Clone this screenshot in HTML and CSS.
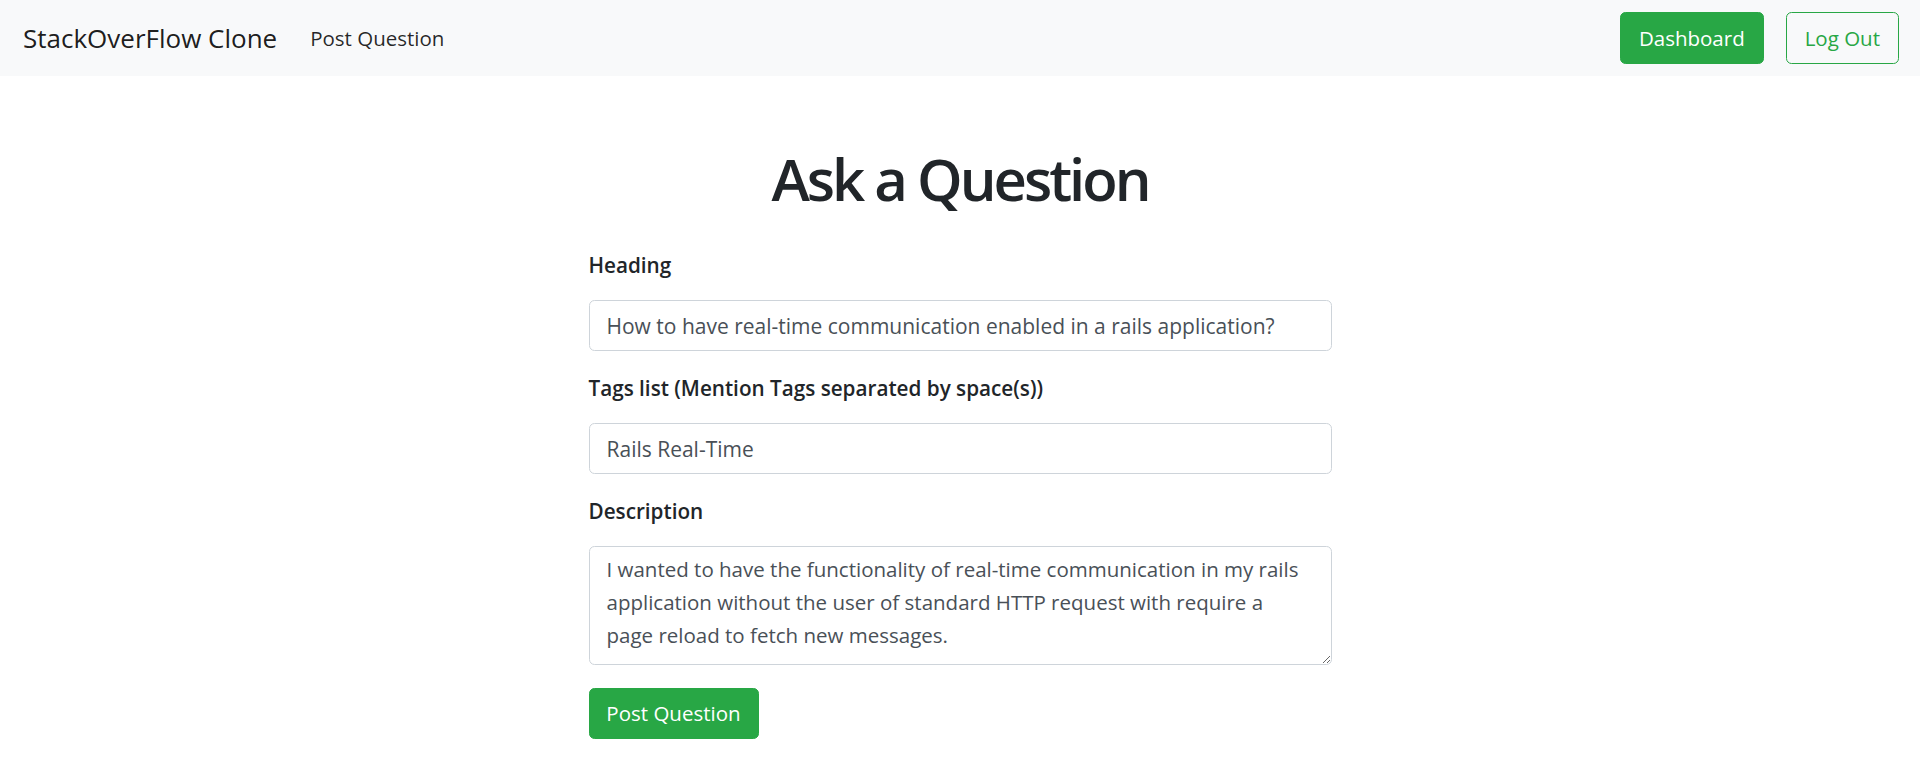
FILE: index.html
```html
<!DOCTYPE html>
<html lang="en">
<head>
<meta charset="utf-8">
<title>Ask a Question</title>
<link rel="stylesheet" href="styles.css">
</head>
<body>
<nav class="navbar">
  <div class="nav-left">
    <a class="brand" href="#">StackOverFlow Clone</a>
    <a class="nav-link" href="#">Post Question</a>
  </div>
  <div class="nav-right">
    <a class="btn btn-success" href="#">Dashboard</a>
    <a class="btn btn-outline" href="#">Log Out</a>
  </div>
</nav>
<main class="page">
  <h1 class="title">Ask a Question</h1>
  <form class="form">
    <div class="form-group">
      <label class="label" for="heading">Heading</label>
      <input class="control" id="heading" type="text" value="How to have real-time communication enabled in a rails application?">
    </div>
    <div class="form-group">
      <label class="label" for="tags">Tags list (Mention Tags separated by space(s))</label>
      <input class="control" id="tags" type="text" value="Rails Real-Time">
    </div>
    <div class="form-group">
      <label class="label" for="desc">Description</label>
      <textarea class="control textarea" id="desc" rows="3">I wanted to have the functionality of real-time communication in my rails application without the user of standard HTTP request with require a page reload to fetch new messages.</textarea>
    </div>
    <button class="btn btn-success btn-submit" type="button">Post Question</button>
  </form>
</main>
</body>
</html>
```

FILE: styles.css
```css
* { box-sizing: border-box; }

html, body {
  margin: 0;
  padding: 0;
  background: #ffffff;
}

body {
  font-family: "Open Sans", "Noto Sans", "Liberation Sans", sans-serif;
  font-size: 22px;
  line-height: 33px;
  color: #212529;
}

a { text-decoration: none; }

.navbar {
  height: 76px;
  background: #f8f9fa;
  display: flex;
  align-items: center;
  justify-content: space-between;
  padding: 0 21px 0 23px;
}

.nav-left {
  display: flex;
  align-items: center;
  gap: 33px;
}

.brand {
  font-size: 26px;
  color: rgba(0, 0, 0, 0.9);
  line-height: 38px;
}

.nav-link {
  font-size: 20.5px;
  color: rgba(0, 0, 0, 0.85);
  line-height: 33px;
}

.nav-right {
  display: flex;
  align-items: center;
  gap: 22px;
}

.btn {
  display: inline-flex;
  align-items: center;
  justify-content: center;
  height: 52px;
  padding: 0 18px;
  border-radius: 5.5px;
  border: 1px solid transparent;
  font-family: inherit;
  font-size: 20.5px;
  line-height: 33px;
}

.btn-success {
  background: #28a745;
  border-color: #28a745;
  color: #ffffff;
}

.btn-outline {
  background: transparent;
  border-color: #28a745;
  color: #28a745;
}

.page {
  width: 743px;
  margin: 0 auto;
}

.title {
  margin: 63px 0 31px;
  font-size: 58px;
  line-height: 79px;
  font-weight: 600;
  letter-spacing: -3px;
  text-align: center;
  color: #212529;
}

.form {
  display: flex;
  flex-direction: column;
}

.form-group {
  display: flex;
  flex-direction: column;
  margin-bottom: 21px;
}

.label {
  font-size: 20.7px;
  font-weight: 600;
  line-height: 33px;
  margin-bottom: 18px;
}

.control {
  width: 100%;
  height: 51px;
  padding: 8px 17px;
  border: 1px solid #ced4da;
  border-radius: 5.5px;
  font-family: inherit;
  font-size: 21px;
  line-height: 33px;
  color: #495057;
  background: #ffffff;
}

.textarea {
  height: 119px;
  padding: 6px 17px;
  font-size: 20.5px;
  resize: vertical;
}

.btn-submit {
  align-self: flex-start;
  margin-top: 2px;
  width: 170px;
  height: 51px;
  padding: 0;
  cursor: pointer;
}
```
